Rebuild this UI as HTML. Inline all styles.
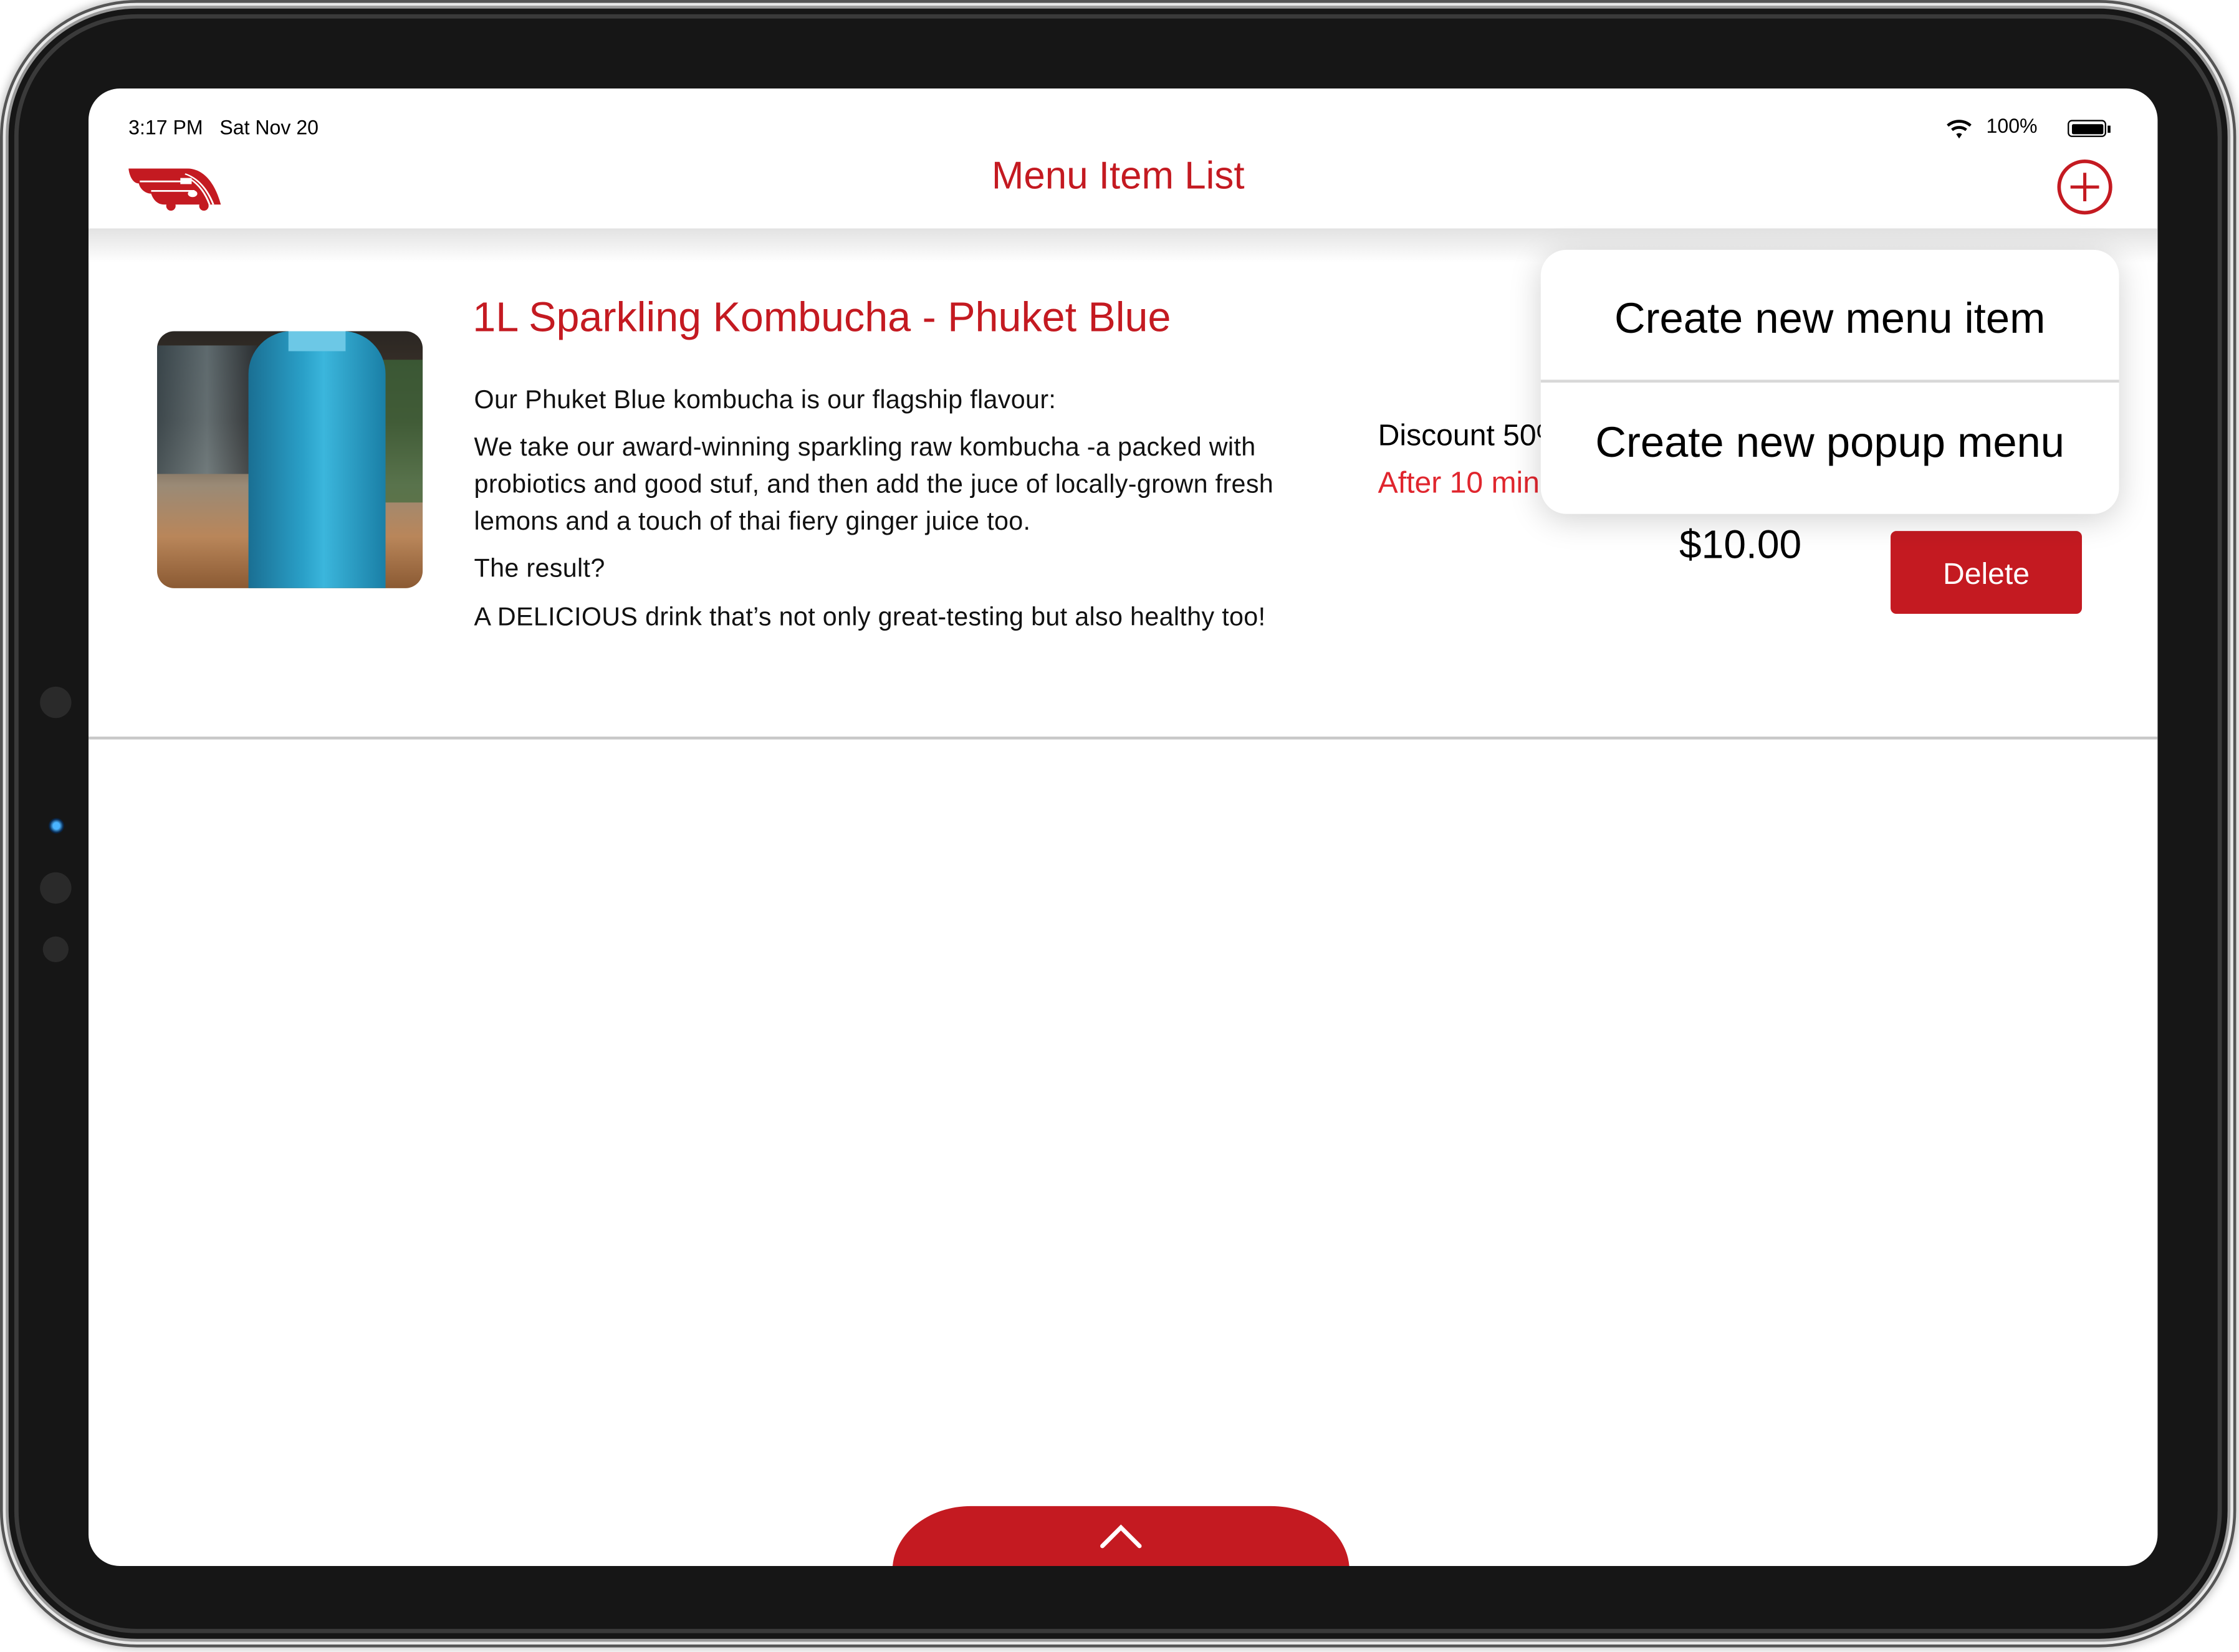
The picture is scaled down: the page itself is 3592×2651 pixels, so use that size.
<!DOCTYPE html>
<html><head><meta charset="utf-8"><style>
html,body{margin:0;padding:0;background:#fff;width:3592px;height:2651px;overflow:hidden}
#w{position:absolute;left:0;top:0;width:1568px;height:1157px;transform:scale(2.29082);transform-origin:0 0;font-family:"Liberation Sans",sans-serif}
.a{position:absolute}
.frame{left:4px;top:4px;width:1558px;height:1146px;border-radius:92px;background:#161616;border:2px solid #9a9a9a;box-shadow:0 0 0 2px #e8e8e8,0 0 0 4px #555,0 0 6px 5px rgba(0,0,0,.25);box-sizing:border-box}
.frame2{left:10px;top:10px;width:1546px;height:1134px;border-radius:86px;border:3px solid #3a3a3a;box-sizing:border-box}
.screen{left:62px;top:62px;width:1449px;height:1035px;background:#fff;border-radius:22px;overflow:hidden}
.red{color:#c41a21}
.desc{font-size:18px;letter-spacing:0.15px;color:#111;line-height:26px}
</style></head><body><div id="w">
<div class="a" style="left:130px;top:0;width:140px;height:6px;background:#888;border-radius:3px"></div>
<div class="a frame"></div>
<div class="a frame2"></div>
<div class="a" style="left:28px;top:481px;width:22px;height:22px;border-radius:50%;background:#2a2a2a"></div>
<div class="a" style="left:34px;top:573px;width:11px;height:11px;border-radius:50%;background:radial-gradient(#4ab4ff 30%,#0a2a50 60%,#111 80%)"></div>
<div class="a" style="left:28px;top:611px;width:22px;height:22px;border-radius:50%;background:#2a2a2a"></div>
<div class="a" style="left:30px;top:656px;width:18px;height:18px;border-radius:50%;background:#2a2a2a"></div>
<div class="a screen">
  <div class="a" style="left:0;top:98px;width:1449px;height:24px;background:linear-gradient(#e2e2e2,#fff)"></div>
  <div class="a" style="left:28px;top:19px;font-size:14px;color:#000">3:17 PM&nbsp;&nbsp;&nbsp;Sat Nov 20</div>
  <svg class="a" style="left:1300px;top:20px" width="20" height="16" viewBox="0 0 20 16"><path d="M2 6a12 12 0 0 1 16 0M5 9a8 8 0 0 1 10 0" stroke="#000" stroke-width="2" fill="none"/><path d="M8 12l2 3 2-3a3 3 0 0 0-4 0z" fill="#000"/></svg>
  <div class="a" style="left:1329px;top:18px;font-size:14px;color:#000">100%</div>
  <div class="a" style="left:1386px;top:22px;width:27px;height:12px;border:1.5px solid #000;border-radius:3px;box-sizing:border-box;padding:1.5px"><div style="width:100%;height:100%;background:#000;border-radius:1px"></div></div>
  <div class="a" style="left:1414px;top:26px;width:2px;height:5px;background:#000"></div>
  <svg class="a" style="left:28px;top:56px" width="66" height="31" viewBox="0 0 100 65" preserveAspectRatio="none"><path d="M0 0H62C80 0 92 22 98 53H38C30 53 26 45 24 37 18 37 12 30 11 22 5 22 1 12 0 0Z" fill="#c41a21"/><path d="M12 19H58M24 33H70" stroke="#fff" stroke-width="2.5"/><path d="M60 8C75 15 84 32 90 53M66 16C76 25 82 38 86 53" stroke="#fff" stroke-width="2" fill="none"/><circle cx="68" cy="37" r="5" fill="#fff"/><rect x="55" y="14" width="12" height="9" fill="#fff"/><ellipse cx="45" cy="55" rx="5" ry="7" fill="#c41a21"/><ellipse cx="80" cy="55" rx="5" ry="7" fill="#c41a21"/></svg>
  <div class="a red" style="left:0;width:1442px;top:46px;text-align:center;font-size:27px">Menu Item List</div>
  <svg class="a" style="left:1378px;top:49px" width="40" height="40" viewBox="0 0 40 40"><circle cx="20" cy="20" r="18" stroke="#c41a21" stroke-width="2.5" fill="none"/><path d="M20 10V30M10 20H30" stroke="#c41a21" stroke-width="2.2"/></svg>
  <div class="a" style="left:48px;top:170px;width:186px;height:180px;border-radius:12px;overflow:hidden;background:linear-gradient(180deg,#2a2622 0%,#4a3c30 35%,#9a8a76 60%,#b9865a 80%,#8b5a33 100%)">
    <div class="a" style="left:0;top:10px;width:70px;height:90px;background:linear-gradient(90deg,#3a4a52,#6a7a80,#2a3035);opacity:.8"></div>
    <div class="a" style="left:150px;top:20px;width:36px;height:100px;background:#3d6a3a;opacity:.7"></div>
    <div class="a" style="left:64px;top:0;width:96px;height:180px;background:linear-gradient(90deg,#1a6f93,#2aa0c8 40%,#3bb6dc 55%,#1a7fa6);border-radius:30px 30px 0 0"></div>
    <div class="a" style="left:92px;top:0;width:40px;height:14px;background:#6cc8e6"></div>
  </div>
  <div class="a red" style="left:269px;top:145px;font-size:29px">1L Sparkling Kombucha - Phuket Blue</div>
  <div class="a desc" style="left:270px;top:205px">Our Phuket Blue kombucha is our flagship flavour:</div>
  <div class="a desc" style="left:270px;top:238px;width:575px">We take our award-winning sparkling raw kombucha -a packed with probiotics and good stuf, and then add the juce of locally-grown fresh lemons and a touch of thai fiery ginger juice too.</div>
  <div class="a desc" style="left:270px;top:323px">The result?</div>
  <div class="a desc" style="left:270px;top:357px">A DELICIOUS drink that’s not only great-testing but also healthy too!</div>
  <div class="a" style="left:903px;top:232px;font-size:21px;color:#000">Discount 50%</div>
  <div class="a red" style="left:903px;top:265px;font-size:21px;color:#e0262e">After 10 minutes</div>
  <div class="a" style="left:1114px;top:304px;font-size:28px;color:#000">$10.00</div>
  <div class="a" style="left:1262px;top:310px;width:134px;height:58px;background:#c41a21;border-radius:4px;color:#fff;font-size:21px;text-align:center;line-height:62px">Delete</div>
  <div class="a" style="left:1017px;top:113px;width:405px;height:185px;background:#fff;border-radius:18px;box-shadow:0 4px 22px rgba(0,0,0,.18);overflow:hidden">
    <div style="height:91px;line-height:98px;text-align:center;font-size:30px;color:#000">Create new menu item</div>
    <div style="height:2px;background:#d8d8d8"></div>
    <div style="height:92px;line-height:86px;text-align:center;font-size:30px;color:#000">Create new popup menu</div>
  </div>
  <div class="a" style="left:0;top:454px;width:1449px;height:2px;background:#c8c8c8"></div>
  <div class="a" style="left:563px;top:993px;width:320px;height:60px;background:#c41a21;border-radius:55px 55px 0 0/45px 45px 0 0"></div>
  <svg class="a" style="left:708px;top:1005px" width="30" height="20" viewBox="0 0 30 20"><path d="M2 16L15 3 28 16" stroke="#fff" stroke-width="3" fill="none" stroke-linecap="round"/></svg>
</div>
</div></body></html>
